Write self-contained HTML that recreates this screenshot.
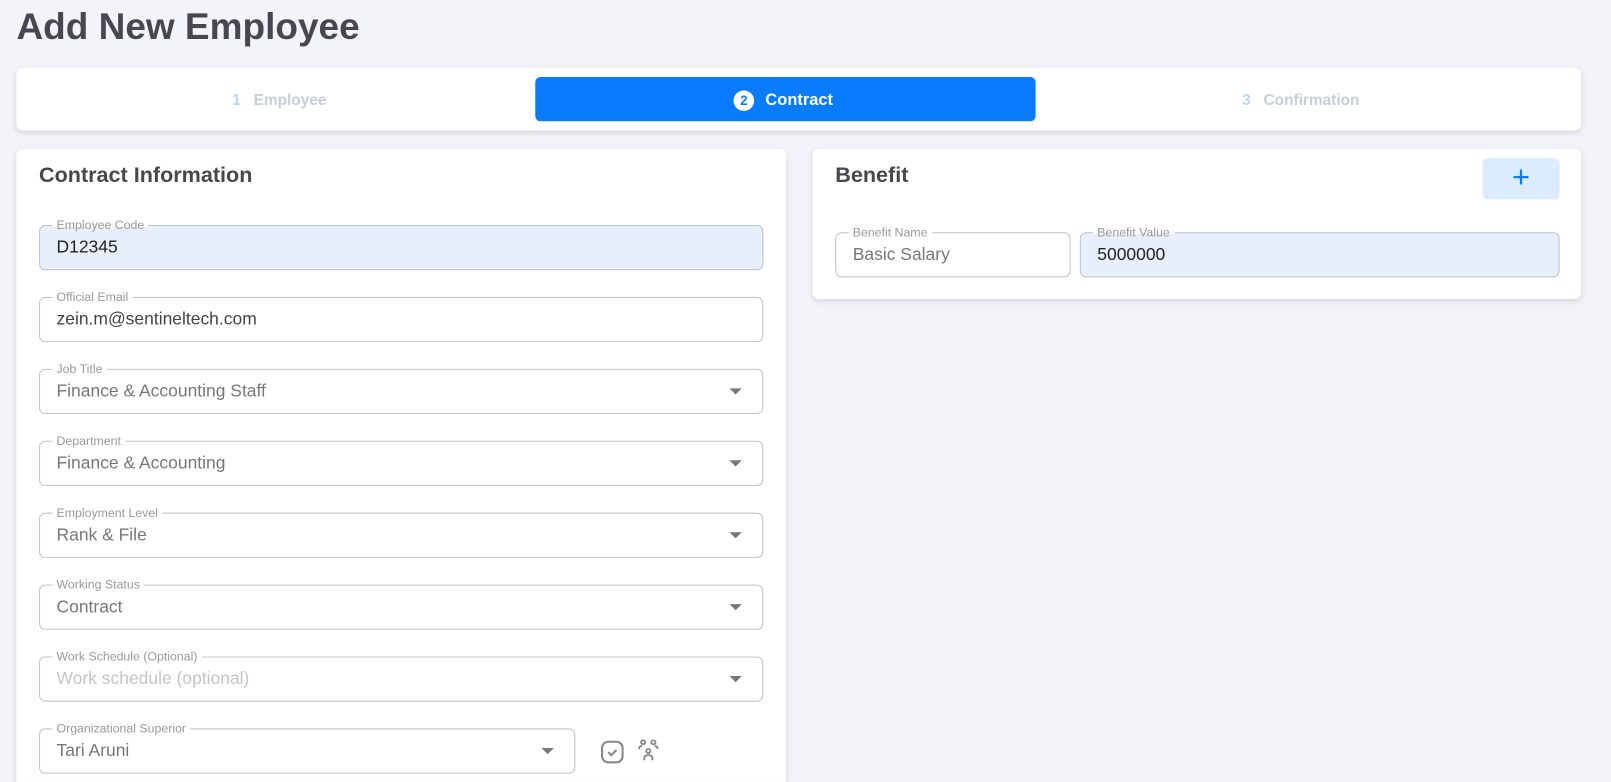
<!DOCTYPE html><html style="overflow:hidden;height:782px"><head><style>
body{margin:0;width:1611px;height:782px;background:#f3f4f9;font-family:"Liberation Sans",sans-serif;position:relative;overflow:hidden}
#w{position:absolute;left:0;top:0;width:1568px;height:761px;overflow:hidden;transform:scale(1.0274);transform-origin:0 0}
.a{position:absolute}
.card{position:absolute;background:#fff;border-radius:6px;box-shadow:0 2px 6px rgba(0,0,0,.12)}
.f{position:absolute;border:1px solid #c4c4c4;border-radius:6px;height:42px;box-sizing:border-box;background:#fff}
.f.fill{background:#e8effb;border-color:#b9c4d6}
.f label{position:absolute;top:-8px;left:12px;background:linear-gradient(#fff 10px,transparent 10px);padding:0 4px;font-size:12px;color:#999;line-height:14px}
.f.fill label{background:linear-gradient(#fff 9px,#e8effb 9px)}
.f span{position:absolute;left:16px;top:11px;font-size:17px;color:#777}
.f.fill span{color:#222}
.f i{position:absolute;right:20px;top:18px;border-left:6px solid transparent;border-right:6px solid transparent;border-top:6px solid #777}
</style></head><body><div id="w">
<div class="a" style="left:16px;top:5px;font-size:36px;font-weight:bold;color:#4a4650">Add New Employee</div>
<div class="card" style="left:16px;top:66px;width:1523px;height:61px">
<div class="a" style="left:210px;top:23px;font-size:15px;color:#c8cdd6;font-weight:bold"><span style="color:#b9d6f5">1</span>&nbsp;&nbsp;&nbsp;Employee</div>
<div class="a" style="left:505px;top:9px;width:487px;height:43px;background:#087cfc;border-radius:5px"></div>
<div class="a" style="left:698px;top:22px;width:20px;height:20px;border-radius:50%;background:#fff;color:#087cfc;font-size:13px;font-weight:bold;text-align:center;line-height:20px">2</div>
<div class="a" style="left:729px;top:23px;font-size:16px;color:#fff;font-weight:bold">Contract</div>
<div class="a" style="left:1193px;top:23px;font-size:15px;color:#c8cdd6;font-weight:bold"><span style="color:#b9d6f5">3</span>&nbsp;&nbsp;&nbsp;Confirmation</div>
</div>
<div class="card" style="left:16px;top:145px;width:749px;height:640px">
<div class="a" style="left:22px;top:14px;font-size:21px;font-weight:bold;color:#4a4650">Contract Information</div>
</div>
<div class="f fill" style="left:38px;top:219px;width:705px;height:44px"><label>Employee Code</label><span>D12345</span></div>
<div class="f" style="left:38px;top:289px;width:705px;height:44px"><label>Official Email</label><span style="color:#444">zein.m@sentineltech.com</span></div>
<div class="f" style="left:38px;top:359px;width:705px;height:44px"><label>Job Title</label><span>Finance &amp; Accounting Staff</span><i></i></div>
<div class="f" style="left:38px;top:429px;width:705px;height:44px"><label>Department</label><span>Finance &amp; Accounting</span><i></i></div>
<div class="f" style="left:38px;top:499px;width:705px;height:44px"><label>Employment Level</label><span>Rank &amp; File</span><i></i></div>
<div class="f" style="left:38px;top:569px;width:705px;height:44px"><label>Working Status</label><span>Contract</span><i></i></div>
<div class="f" style="left:38px;top:639px;width:705px;height:44px"><label>Work Schedule (Optional)</label><span style="color:#c4c4c4">Work schedule (optional)</span><i></i></div>
<div class="f" style="left:38px;top:709px;width:522px;height:44px"><label>Organizational Superior</label><span>Tari Aruni</span><i></i></div>
<svg class="a" style="left:584px;top:720px" width="24" height="24" viewBox="0 0 24 24" fill="none" stroke="#888" stroke-width="2"><rect x="2" y="2" width="20" height="20" rx="6"/><path d="M8 12l3 3 5-5"/></svg>
<svg class="a" style="left:619px;top:719px" width="24" height="24" viewBox="0 0 24 24" fill="none" stroke="#888" stroke-width="1.8"><circle cx="7" cy="3.5" r="2"/><circle cx="17" cy="3.5" r="2"/><circle cx="12" cy="12" r="2"/><path d="M3 10q0-3 3-3M21 10q0-3-3-3M8 21v-2q0-3 4-3t4 3v2"/></svg>
<div class="card" style="left:791px;top:145px;width:748px;height:146px">
<div class="a" style="left:22px;top:14px;font-size:21px;font-weight:bold;color:#4a4650">Benefit</div>
<div class="a" style="left:652px;top:9px;width:75px;height:40px;background:#dbeafd;border-radius:5px;color:#087cfc;font-size:30px;text-align:center;line-height:38px">+</div>
</div>
<div class="f" style="left:813px;top:226px;width:229px;height:44px"><label>Benefit Name</label><span>Basic Salary</span></div>
<div class="f fill" style="left:1051px;top:226px;width:467px;height:44px"><label>Benefit Value</label><span>5000000</span></div>
</div></body></html>
